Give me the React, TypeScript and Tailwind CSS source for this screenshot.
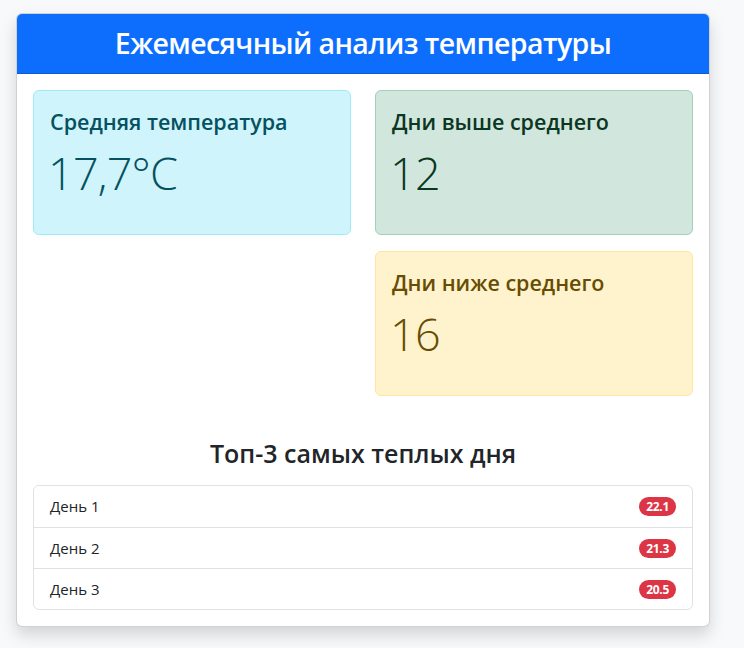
const stats = [
  { label: "Дни выше среднего", value: "12", box: "bg-[#d1e7dd] border-[#a3cfbb] text-[#0a3622]" },
  { label: "Дни ниже среднего", value: "16", box: "bg-[#fff3cd] border-[#ffe69c] text-[#664d03]" },
];

const warmest = [
  { day: "День 1", temp: "22.1" },
  { day: "День 2", temp: "21.3" },
  { day: "День 3", temp: "20.5" },
];

function StatBox({ label, value, box }: { label: string; value: string; box: string }) {
  return (
    <div className={`h-[145px] rounded-md border px-4 pt-[19px] ${box}`}>
      <h5 className="text-[21.5px] font-semibold leading-[24px]">{label}</h5>
      <p className="mt-[13px] -ml-[2px] text-[45px] font-light leading-[52px] tracking-[-0.8px]">{value}</p>
    </div>
  );
}

export default function App() {
  return (
    <div className="min-h-screen bg-[#f8f9fa] pt-[13px] pl-4 font-['Open_Sans','Noto_Sans',sans-serif] text-[#212529]">
      <div className="w-[694px] rounded-md border border-black/[.175] bg-white shadow-[0_8px_16px_rgba(0,0,0,0.15)]">
        <div className="flex h-[60px] items-center justify-center rounded-t-[5px] border-b border-black/[.175] bg-[#0d6efd]">
          <h2 className="text-[28.5px] font-semibold tracking-[-0.6px] text-white">
            Ежемесячный анализ температуры
          </h2>
        </div>

        <div className="p-4">
          <div className="grid grid-cols-2 gap-x-6">
            <div>
              <StatBox
                label="Средняя температура"
                value="17,7°C"
                box="bg-[#cff4fc] border-[#9eeaf9] text-[#055160]"
              />
            </div>
            <div className="flex flex-col gap-4">
              {stats.map((s) => (
                <StatBox key={s.label} label={s.label} value={s.value} box={s.box} />
              ))}
            </div>
          </div>

          <h4 className="mt-[42px] mb-[17px] text-center text-[25px] font-semibold leading-[30px]">
            Топ-3 самых теплых дня
          </h4>

          <ul className="rounded-md border border-[#dee2e6]">
            {warmest.map((w, i) => (
              <li
                key={w.day}
                className={`flex h-[41px] items-center justify-between px-4 text-[15px] ${
                  i > 0 ? "border-t border-[#dee2e6]" : ""
                }`}
              >
                <span>{w.day}</span>
                <span className="rounded-full bg-[#dc3545] px-[7px] py-[2px] text-[12px] font-bold leading-[15px] tracking-[-0.3px] text-white">
                  {w.temp}
                </span>
              </li>
            ))}
          </ul>
        </div>
      </div>
    </div>
  );
}
